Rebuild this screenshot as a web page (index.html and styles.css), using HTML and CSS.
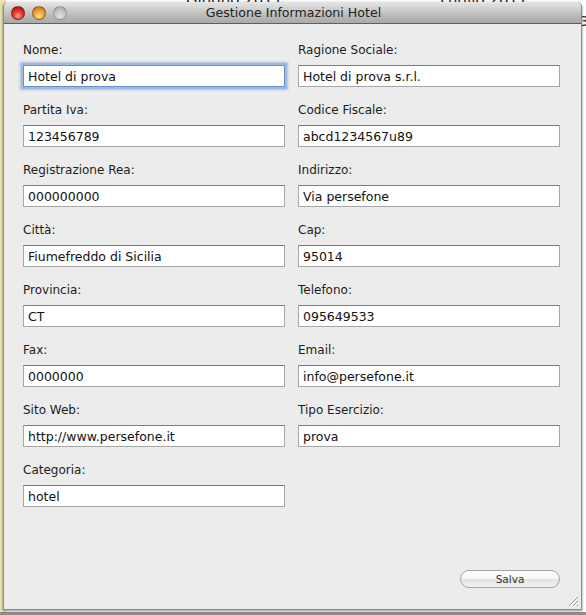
FILE: index.html
```html
<!DOCTYPE html>
<html lang="it">
<head>
    <meta charset="UTF-8">
    <title>Gestione Informazioni Hotel</title>
    <link rel="stylesheet" href="styles.css">
</head>
<body>
    <div class="desktop">
        <div class="calendar-strip"></div>
        <span class="month month-jun">Giugno 2011</span>
        <span class="month month-jul">Luglio 2011</span>
        <span class="day-num">3</span>

        <div class="window">
            <div class="titlebar">
                <div class="lights">
                    <span class="light red"></span>
                    <span class="light orange"></span>
                    <span class="light off"></span>
                </div>
                <div class="title">Gestione Informazioni Hotel</div>
            </div>

            <div class="content">
                <form class="fields">
                    <div class="field">
                        <label>Nome:</label>
                        <input class="focused" type="text" value="Hotel di prova">
                    </div>
                    <div class="field">
                        <label>Ragione Sociale:</label>
                        <input type="text" value="Hotel di prova s.r.l.">
                    </div>
                    <div class="field">
                        <label>Partita Iva:</label>
                        <input type="text" value="123456789">
                    </div>
                    <div class="field">
                        <label>Codice Fiscale:</label>
                        <input type="text" value="abcd1234567u89">
                    </div>
                    <div class="field">
                        <label>Registrazione Rea:</label>
                        <input type="text" value="000000000">
                    </div>
                    <div class="field">
                        <label>Indirizzo:</label>
                        <input type="text" value="Via persefone">
                    </div>
                    <div class="field">
                        <label>Città:</label>
                        <input type="text" value="Fiumefreddo di Sicilia">
                    </div>
                    <div class="field">
                        <label>Cap:</label>
                        <input type="text" value="95014">
                    </div>
                    <div class="field">
                        <label>Provincia:</label>
                        <input type="text" value="CT">
                    </div>
                    <div class="field">
                        <label>Telefono:</label>
                        <input type="text" value="095649533">
                    </div>
                    <div class="field">
                        <label>Fax:</label>
                        <input type="text" value="0000000">
                    </div>
                    <div class="field">
                        <label>Email:</label>
                        <input type="text" value="info@persefone.it">
                    </div>
                    <div class="field">
                        <label>Sito Web:</label>
                        <input type="text" value="http://www.persefone.it">
                    </div>
                    <div class="field">
                        <label>Tipo Esercizio:</label>
                        <input type="text" value="prova">
                    </div>
                    <div class="field">
                        <label>Categoria:</label>
                        <input type="text" value="hotel">
                    </div>
                </form>

                <div class="actions">
                    <button type="button" class="btn">Salva</button>
                </div>
            </div>

            <svg class="grip" width="12" height="12" viewBox="0 0 12 12">
                <path d="M11 2 L2 11 M11 6 L6 11 M11 10 L10 11" stroke="#8c8c8c" stroke-width="1"/>
                <path d="M11 3 L3 11 M11 7 L7 11" stroke="#ffffff" stroke-width="1"/>
            </svg>
        </div>
    </div>
</body>
</html>
```

FILE: styles.css
```css
html, body {
    margin: 0;
    padding: 0;
}

body {
    background-color: #8e8e8e;
    font-family: "DejaVu Sans", sans-serif;
    color: #1e1e1e;
}

.desktop {
    position: relative;
    width: 586px;
    height: 615px;
    overflow: hidden;
    background: linear-gradient(#ffffff, #ffffff) top / 100% 612px no-repeat, #8e8e8e;
}

.calendar-strip {
    position: absolute;
    left: 0;
    top: 0;
    width: 6px;
    height: 612px;
    background-color: #e9e2b2;
}

/* calendar behind the window, only a sliver shows */
.month {
    position: absolute;
    top: -9px;
    font-size: 15px;
    color: #222;
}

.month-jun {
    left: 186px;
}

.month-jul {
    left: 440px;
}

.day-num {
    position: absolute;
    right: -3px;
    top: 13px;
    font-size: 14px;
    color: #333;
}

.window {
    position: absolute;
    left: 3px;
    top: 2px;
    width: 577px;
    height: 607px;
    background-color: #ececec;
    border: 1px solid #8a8a8a;
    border-top: none;
    border-radius: 5px 5px 0 0;
    box-shadow: 0 1px 3px rgba(0, 0, 0, 0.45);
    display: flex;
    flex-direction: column;
}

.titlebar {
    position: relative;
    height: 21px;
    border-radius: 5px 5px 0 0;
    background: linear-gradient(#e6e6e6, #bdbdbd 60%, #a9a9a9);
    border-bottom: 1px solid #5f5f5f;
    display: flex;
    align-items: center;
    justify-content: center;
}

.lights {
    position: absolute;
    left: 7px;
    top: 4px;
    display: flex;
    gap: 7px;
}

.light {
    width: 14px;
    height: 14px;
    border-radius: 50%;
    box-sizing: border-box;
    border: 1px solid rgba(0, 0, 0, 0.35);
}

.red {
    background: radial-gradient(circle at 50% 75%, #ff9a8a 0, #e2372c 45%, #a8110c 100%);
}

.orange {
    background: radial-gradient(circle at 50% 75%, #ffe49a 0, #f0a430 45%, #b86a10 100%);
}

.off {
    background: radial-gradient(circle at 50% 75%, #e2e2e2 0, #c4c4c4 50%, #a2a2a2 100%);
    border-color: rgba(0, 0, 0, 0.2);
}

.title {
    font-size: 12.6px;
    color: #222;
    padding-left: 2px;
}

.content {
    flex: 1;
    padding: 18px 20px 0 19px;
    display: flex;
    flex-direction: column;
}

.fields {
    display: grid;
    grid-template-columns: 262px 262px;
    column-gap: 13px;
    row-gap: 15px;
    margin: 0;
}

.field {
    display: flex;
    flex-direction: column;
}

.field label {
    font-size: 12px;
    line-height: 16px;
    height: 16px;
    margin-bottom: 7px;
    color: #1c1c1c;
}

.field input {
    box-sizing: border-box;
    width: 262px;
    height: 22px;
    margin: 0;
    padding: 1px 4px 0 4px;
    font-family: "DejaVu Sans", sans-serif;
    font-size: 12.5px;
    color: #111;
    background-color: #fff;
    border: 1px solid #a6a6a6;
    border-top-color: #7c7c7c;
    border-radius: 0;
    outline: none;
}

.field input.focused {
    border-color: #6c8fc4;
    box-shadow: 0 0 0 2px #9bbbe6, 0 0 2px 3px rgba(110, 150, 210, 0.5);
}

.actions {
    margin-top: auto;
    margin-bottom: 21px;
    display: flex;
    justify-content: flex-end;
    padding-right: 1px;
}

.btn {
    width: 100px;
    height: 18px;
    padding: 0;
    border: 1px solid #a3a3a3;
    border-radius: 9px;
    background: linear-gradient(#ffffff, #f6f6f6 50%, #e2e2e2 51%, #f3f3f3);
    font-family: "DejaVu Sans", sans-serif;
    font-size: 10.5px;
    color: #333;
}

.grip {
    position: absolute;
    right: 2px;
    bottom: 2px;
}
```
